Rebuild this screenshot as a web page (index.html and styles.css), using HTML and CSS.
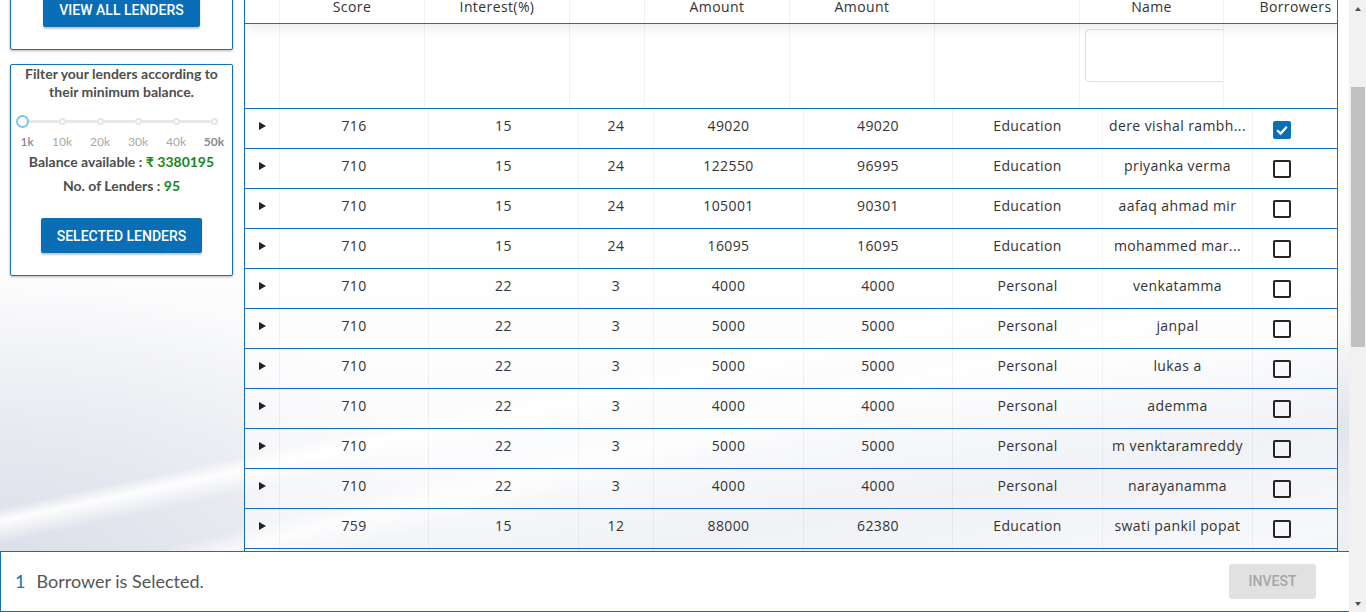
FILE: index.html
```html
<!DOCTYPE html>
<html lang="en">
<head>
<meta charset="utf-8">
<title>Lenders</title>
<link rel="stylesheet" href="styles.css">
</head>
<body>
<div class="screen">
  <div class="page">
    <div class="main">
      <aside class="sidebar">
        <section class="card card-top">
          <button class="btn btn-view">VIEW ALL LENDERS</button>
        </section>
        <section class="card card-filter">
          <p class="filter-title">Filter your lenders according to their minimum balance.</p>
          <div class="slider">
            <span class="handle"></span>
            <span class="dot"></span>
            <span class="dot"></span>
            <span class="dot"></span>
            <span class="dot"></span>
            <span class="dot"></span>
          </div>
          <div class="marks">
            <span class="mark mark-on">1k</span>
            <span class="mark">10k</span>
            <span class="mark">20k</span>
            <span class="mark">30k</span>
            <span class="mark">40k</span>
            <span class="mark mark-max">50k</span>
          </div>
          <p class="stat stat-first">Balance available : <span class="green">₹ 3380195</span></p>
          <p class="stat">No. of Lenders : <span class="green">95</span></p>
          <button class="btn btn-selected">SELECTED LENDERS</button>
        </section>
      </aside>

      <div class="grid">
        <div class="grid-head">
          <div class="hrow">
            <div class="hcell"></div>
            <div class="hcell">Score</div>
            <div class="hcell">Interest(%)</div>
            <div class="hcell"></div>
            <div class="hcell">Amount</div>
            <div class="hcell">Amount</div>
            <div class="hcell"></div>
            <div class="hcell">Name</div>
            <div class="hcell">Borrowers</div>
          </div>
          <div class="hrow filter-row">
            <div class="fcell"></div>
            <div class="fcell"></div>
            <div class="fcell"></div>
            <div class="fcell"></div>
            <div class="fcell"></div>
            <div class="fcell"></div>
            <div class="fcell"></div>
            <div class="fcell fcell-input"><input class="filter-input" type="text"></div>
            <div class="fcell"></div>
          </div>
        </div>

        <div class="grid-body">
          <div class="row"><div class="cell exp"><span class="tri"></span></div><div class="cell">716</div><div class="cell">15</div><div class="cell">24</div><div class="cell">49020</div><div class="cell">49020</div><div class="cell">Education</div><div class="cell">dere vishal rambh...</div><div class="cell chk"><span class="box box-on"><svg viewBox="0 0 18 18" width="18" height="18"><path d="M4.2 9.3 L7.6 12.6 L13.8 5.8" fill="none" stroke="#fff" stroke-width="2.2"/></svg></span></div></div>
          <div class="row"><div class="cell exp"><span class="tri"></span></div><div class="cell">710</div><div class="cell">15</div><div class="cell">24</div><div class="cell">122550</div><div class="cell">96995</div><div class="cell">Education</div><div class="cell">priyanka verma</div><div class="cell chk"><span class="box"></span></div></div>
          <div class="row"><div class="cell exp"><span class="tri"></span></div><div class="cell">710</div><div class="cell">15</div><div class="cell">24</div><div class="cell">105001</div><div class="cell">90301</div><div class="cell">Education</div><div class="cell">aafaq ahmad mir</div><div class="cell chk"><span class="box"></span></div></div>
          <div class="row"><div class="cell exp"><span class="tri"></span></div><div class="cell">710</div><div class="cell">15</div><div class="cell">24</div><div class="cell">16095</div><div class="cell">16095</div><div class="cell">Education</div><div class="cell">mohammed mar...</div><div class="cell chk"><span class="box"></span></div></div>
          <div class="row"><div class="cell exp"><span class="tri"></span></div><div class="cell">710</div><div class="cell">22</div><div class="cell">3</div><div class="cell">4000</div><div class="cell">4000</div><div class="cell">Personal</div><div class="cell">venkatamma</div><div class="cell chk"><span class="box"></span></div></div>
          <div class="row"><div class="cell exp"><span class="tri"></span></div><div class="cell">710</div><div class="cell">22</div><div class="cell">3</div><div class="cell">5000</div><div class="cell">5000</div><div class="cell">Personal</div><div class="cell">janpal</div><div class="cell chk"><span class="box"></span></div></div>
          <div class="row"><div class="cell exp"><span class="tri"></span></div><div class="cell">710</div><div class="cell">22</div><div class="cell">3</div><div class="cell">5000</div><div class="cell">5000</div><div class="cell">Personal</div><div class="cell">lukas a</div><div class="cell chk"><span class="box"></span></div></div>
          <div class="row"><div class="cell exp"><span class="tri"></span></div><div class="cell">710</div><div class="cell">22</div><div class="cell">3</div><div class="cell">4000</div><div class="cell">4000</div><div class="cell">Personal</div><div class="cell">ademma</div><div class="cell chk"><span class="box"></span></div></div>
          <div class="row"><div class="cell exp"><span class="tri"></span></div><div class="cell">710</div><div class="cell">22</div><div class="cell">3</div><div class="cell">5000</div><div class="cell">5000</div><div class="cell">Personal</div><div class="cell">m venktaramreddy</div><div class="cell chk"><span class="box"></span></div></div>
          <div class="row"><div class="cell exp"><span class="tri"></span></div><div class="cell">710</div><div class="cell">22</div><div class="cell">3</div><div class="cell">4000</div><div class="cell">4000</div><div class="cell">Personal</div><div class="cell">narayanamma</div><div class="cell chk"><span class="box"></span></div></div>
          <div class="row"><div class="cell exp"><span class="tri"></span></div><div class="cell">759</div><div class="cell">15</div><div class="cell">12</div><div class="cell">88000</div><div class="cell">62380</div><div class="cell">Education</div><div class="cell">swati pankil popat</div><div class="cell chk"><span class="box"></span></div></div>
          <div class="row"><div class="cell exp"><span class="tri"></span></div><div class="cell">710</div><div class="cell">22</div><div class="cell">3</div><div class="cell">4000</div><div class="cell">4000</div><div class="cell">Personal</div><div class="cell">lakshmi</div><div class="cell chk"><span class="box"></span></div></div>
        </div>
      </div>
    </div>

    <footer class="footer">
      <p class="selected-info"><span class="count">1</span>Borrower is Selected.</p>
      <button class="btn-invest" disabled>INVEST</button>
    </footer>
  </div>

  <div class="scrollbar">
    <span class="sb-btn"><span class="arrow-up"></span></span>
    <div class="sb-track"><span class="sb-thumb"></span></div>
    <span class="sb-btn"><span class="arrow-down"></span></span>
  </div>
</div>
</body>
</html>
```

FILE: styles.css
```css
* { box-sizing: border-box; }

html, body {
  margin: 0;
  padding: 0;
  height: 612px;
  overflow: hidden;
}

body {
  font-family: "Open Sans", "Liberation Sans", sans-serif;
  color: #333;
}

.screen {
  display: flex;
  height: 612px;
  overflow: hidden;
}

.page {
  flex: 1;
  overflow: hidden;
  background-color: #fff;
  background-image:
    linear-gradient(168deg, rgba(255,255,255,0) 56.5%, rgba(255,255,255,0.95) 58%, rgba(255,255,255,0) 60.5%),
    linear-gradient(166deg, rgba(255,255,255,0) 62%, rgba(255,255,255,0.7) 64%, rgba(255,255,255,0) 67%),
    linear-gradient(170deg, rgba(255,255,255,0) 66%, rgba(222,226,235,0.85) 78%, rgba(236,238,243,0.6) 90%, rgba(226,229,237,0.8) 100%),
    radial-gradient(ellipse 620px 380px at 0% 92%, rgba(219,223,233,1), rgba(219,223,233,0) 75%),
    linear-gradient(180deg, #fff 35%, #eef0f4 100%);
}

.main {
  display: flex;
  align-items: flex-start;
}

/* ---------- sidebar ---------- */
.sidebar {
  width: 223px;
  margin-left: 10px;
  margin-top: -30px;
  display: flex;
  flex-direction: column;
  gap: 14px;
}

.card {
  background: #fff;
  border: 1px solid #1370b8;
  border-radius: 2px;
  box-shadow: 0 1px 3px rgba(0, 0, 0, 0.28);
  display: flex;
  flex-direction: column;
  align-items: center;
}

.card-top {
  padding: 21px 0 22px;
}

.card-filter {
  padding: 0 0 22px;
}

.btn {
  font-family: Roboto, "Liberation Sans", sans-serif;
  font-weight: 500;
  font-size: 14px;
  color: #fff;
  background: #0a6eb6;
  border: none;
  border-radius: 2px;
  height: 35px;
  padding: 0;
  box-shadow: 0 2px 2px rgba(0, 0, 0, 0.22);
  letter-spacing: 0;
}

.btn-view { width: 157px; }
.btn-selected { width: 161px; margin-top: 20px; }

.filter-title {
  margin: 0;
  font-family: Lato, "Liberation Sans", sans-serif;
  font-weight: 700;
  font-size: 14px;
  line-height: 18px;
  color: #4e4e4e;
  text-align: center;
  width: 212px;
}

.slider {
  margin-top: 14px;
  width: 228px;
  margin-left: -5px;
  height: 13px;
  display: grid;
  grid-template-columns: repeat(6, 38px);
  justify-items: center;
  align-items: center;
  background: linear-gradient(#e8e8e8, #e8e8e8) no-repeat;
  background-size: 190px 3px;
  background-position: 19px 5px;
}

.handle {
  width: 13px;
  height: 13px;
  border-radius: 50%;
  border: 2px solid #76c8f2;
  background: #fff;
  margin-right: 3px;
}

.dot {
  width: 7px;
  height: 7px;
  border-radius: 50%;
  background: #fff;
  border: 2px solid #e6e6e6;
}

.marks {
  margin-top: 7px;
  width: 228px;
  margin-left: -5px;
  display: grid;
  grid-template-columns: repeat(6, 38px);
  justify-items: center;
  font-family: Lato, "Liberation Sans", sans-serif;
  font-size: 12px;
  line-height: 13px;
  color: #a9a9a9;
}

.mark-on { color: #777; padding-left: 6px; }
.mark-max { color: #8a8a8a; font-weight: 700; }

.stat {
  margin: 0;
  font-family: Lato, "Liberation Sans", sans-serif;
  font-weight: 700;
  font-size: 14px;
  line-height: 24px;
  color: #4e4e4e;
}

.stat-first { margin-top: 2px; }

.green { color: #16881a; }

/* ---------- grid ---------- */
.grid {
  margin-left: 11px;
  width: 1094px;
  border-left: 1px solid #1370b8;
  border-right: 1px solid #1370b8;
  overflow: hidden;
  font-size: 14px;
  letter-spacing: 0.4px;
  color: #333;
}

.grid-head {
  position: relative;
  z-index: 1;
}

.hrow {
  display: grid;
  grid-template-columns: 35px 145px 145px 75px 145px 145px 145px 144px 144px;
  width: 1128px;
  border-bottom: 1px solid #1370b8;
  background: #fff;
}

.hrow:first-child {
  box-shadow: 0 5px 12px rgba(0, 0, 0, 0.07);
  position: relative;
  z-index: 1;
}

.hcell {
  height: 23px;
  line-height: 14px;
  text-align: center;
  white-space: nowrap;
  border-right: 1px solid #f0f0f0;
}

.filter-row { height: 85px; }

.fcell {
  height: 84px;
  border-right: 1px solid #f2f2f2;
}

.fcell-input {
  padding: 5px 0 0 5px;
  overflow: hidden;
}

.filter-input {
  width: 160px;
  height: 53px;
  border: 1px solid #e1e1e1;
  border-radius: 4px;
  background: #fff;
  outline: none;
}

.row {
  display: grid;
  grid-template-columns: 35px 149px 150px 75px 150px 149px 150px 150px 150px;
  width: 1158px;
  height: 40px;
  border-bottom: 1px solid #1370b8;
  background: rgba(255, 255, 255, 0.5);
}

.cell {
  height: 39px;
  line-height: 34px;
  text-align: center;
  white-space: nowrap;
  border-right: 1px solid rgba(0, 0, 0, 0.045);
}

.exp {
  padding: 13px 0 0 14px;
  text-align: left;
  line-height: 0;
}

.tri {
  display: block;
  width: 0;
  height: 0;
  border-top: 4.5px solid transparent;
  border-bottom: 4.5px solid transparent;
  border-left: 7px solid #222;
}

.chk {
  padding: 11px 0 0 20px;
  text-align: left;
  line-height: 0;
}

.box {
  display: block;
  width: 18px;
  height: 18px;
  border: 2px solid #262626;
  border-radius: 2px;
}

.box-on {
  border: none;
  background: #0b6fb8;
  margin-top: 1px;
}

.box-on svg { display: block; }

/* ---------- footer ---------- */
.footer {
  position: fixed;
  left: 0;
  bottom: 0;
  right: 17px;
  height: 61px;
  background: #fff;
  border: 1px solid #1370b8;
  border-right: none;
  display: flex;
  align-items: center;
  justify-content: space-between;
  padding: 0 33px 0 14px;
}

.selected-info {
  margin: 0 0 1px;
  font-family: Lato, "Liberation Sans", sans-serif;
  font-size: 18px;
  color: #565656;
  display: flex;
  align-items: baseline;
  gap: 11px;
}

.count { color: #1572b8; }

.btn-invest {
  font-family: Roboto, "Liberation Sans", sans-serif;
  font-weight: 500;
  font-size: 14px;
  color: #a6a6a6;
  background: #e1e1e1;
  border: none;
  border-radius: 3px;
  width: 87px;
  height: 35px;
  padding: 0;
  margin-top: -1px;
}

/* ---------- scrollbar ---------- */
.scrollbar {
  width: 17px;
  height: 612px;
  background: #f1f1f1;
  display: flex;
  flex-direction: column;
}

.sb-btn {
  height: 17px;
  display: flex;
  align-items: center;
  justify-content: center;
}

.arrow-up {
  width: 0;
  height: 0;
  border-left: 3.5px solid transparent;
  border-right: 3.5px solid transparent;
  border-bottom: 4px solid #505050;
}

.arrow-down {
  width: 0;
  height: 0;
  border-left: 3.5px solid transparent;
  border-right: 3.5px solid transparent;
  border-top: 4px solid #505050;
}

.sb-track {
  flex: 1;
  display: flex;
  flex-direction: column;
}

.sb-thumb {
  margin: 70px 1px 0 2px;
  height: 260px;
  background: #c1c1c1;
}
```
